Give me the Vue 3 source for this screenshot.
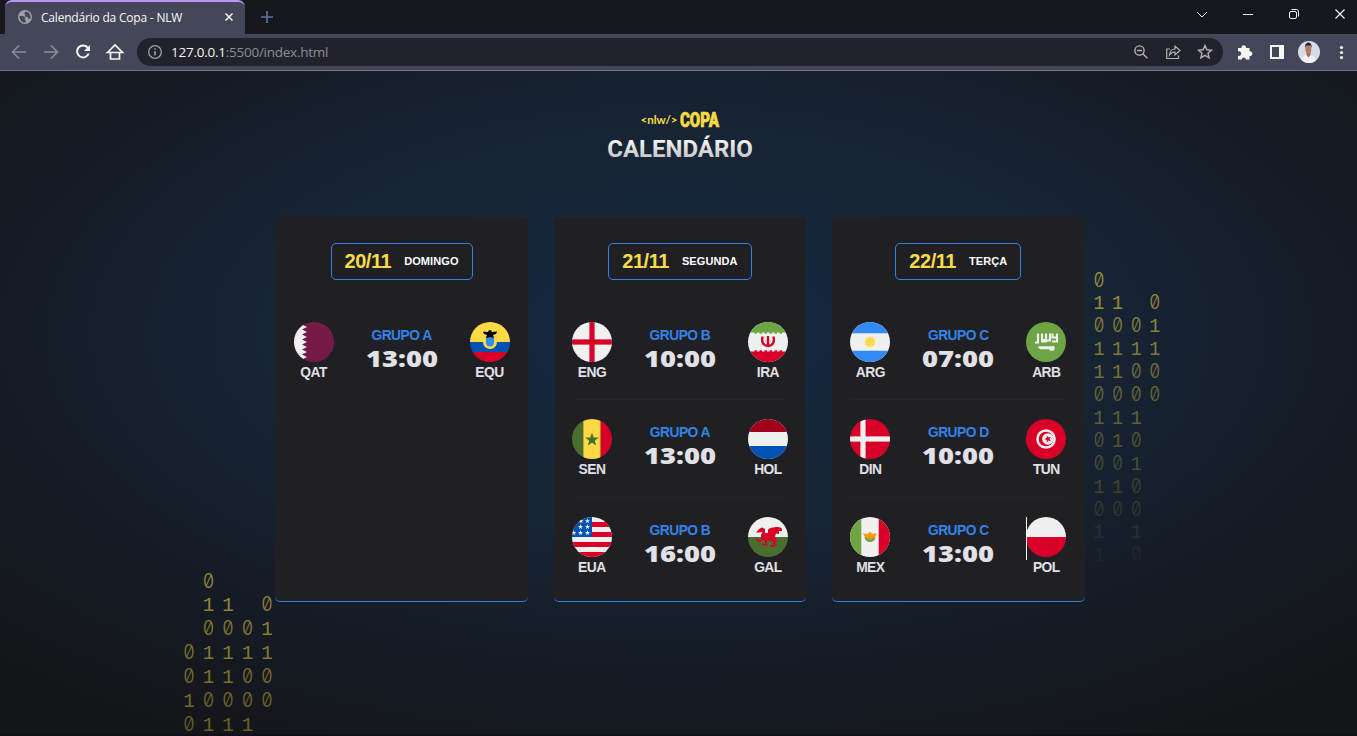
<script setup>
const star = (x, y, r) => {
  const pts = []
  for (let i = 0; i < 10; i++) {
    const a = (Math.PI / 5) * i - Math.PI / 2
    const q = i % 2 ? r * 0.4 : r
    pts.push((x + q * Math.cos(a)).toFixed(2) + ',' + (y + q * Math.sin(a)).toFixed(2))
  }
  return pts.join(' ')
}
const poly = (x, y, r, fill) => `<polygon points="${star(x, y, r)}" fill="${fill}"/>`
const box = (x, y, w, h, fill) => `<rect x="${x}" y="${y}" width="${w}" height="${h}" fill="${fill}"/>`

const sunPoints = Array.from({ length: 24 }, (_, i) => {
  const a = (Math.PI / 12) * i
  const q = i % 2 ? 4.2 : 6.2
  return (20 + q * Math.cos(a)).toFixed(2) + ',' + (20 + q * Math.sin(a)).toFixed(2)
}).join(' ')

const flags = {
  QAT: box(0, 0, 40, 40, '#751a46') +
    '<path d="M0 0H13L8 2.5L13 5L8 7.5L13 10L8 12.5L13 15L8 17.5L13 20L8 22.5L13 25L8 27.5L13 30L8 32.5L13 35L8 37.5L13 40H0Z" fill="#f0f0f0"/>',
  EQU: box(0, 0, 40, 20, '#ffda44') + box(0, 20, 40, 10, '#0052b4') + box(0, 30, 40, 10, '#d80027') +
    '<circle cx="20" cy="20" r="7" fill="#ffda44"/><path d="M16 15h8v5.500a4 4 0 0 1-8 0z" fill="#338af3"/><path d="M13 9.500l5 .500c0-2.500 4-2.500 4 0l5-.500c0 2.500-2 3.200-4 3.200l1 3.300c-1.500-1-6.500-1-8 0l1-3.300c-2 0-4-.700-4-3.200z" fill="#000"/>',
  ENG: box(0, 0, 40, 40, '#f0f0f0') + box(17.4, 0, 5.2, 40, '#d80027') + box(0, 17.4, 40, 5.2, '#d80027'),
  IRA: box(0, 0, 40, 40, '#f0f0f0') + box(0, 0, 40, 10.500, '#6da544') + box(0, 29.500, 40, 10.500, '#d80027') +
    [8, 13, 18, 23, 28, 33].map(x => box(x - 1.500, 9.500, 2.500, 2.200, '#6da544') + box(x - 1.500, 28.300, 2.500, 2.200, '#d80027')).join('') +
    '<path d="M14.700 14.500c-1.500 5 0 9 5.300 9.500c5.300-.500 6.800-4.500 5.300-9.500M20 14v11" fill="none" stroke="#d80027" stroke-width="2.400"/>',
  ARG: box(0, 0, 40, 40, '#f0f0f0') + box(0, 0, 40, 11.300, '#338af3') + box(0, 28.700, 40, 11.300, '#338af3') +
    `<polygon points="${sunPoints}" fill="#ffda44"/>`,
  ARB: box(0, 0, 40, 40, '#6da544') +
    '<path d="M9 20.500h3V11.500M16 11.500v6.500h3.500M20 11.500v8h-5M24 11.500v7h-4M26.500 11.500v4h3.500M31 11.500v8h-5" fill="none" stroke="#f0f0f0" stroke-width="2.100"/><path d="M12 24.300h16.500v3c0 2-5 2-5.500 0H15c-2 0-3-1-3-3z" fill="#f0f0f0"/>',
  SEN: box(0, 0, 11.300, 40, '#496e2d') + box(11.300, 0, 17.400, 40, '#ffda44') + box(28.700, 0, 11.300, 40, '#d80027') + poly(20, 20.800, 7.200, '#496e2d'),
  HOL: box(0, 0, 40, 40, '#f0f0f0') + box(0, 0, 40, 13, '#a2001d') + box(0, 27, 40, 13, '#0052b4'),
  EUA: box(0, 0, 40, 40, '#f0f0f0') +
    [5, 15, 25, 35].map(y => box(0, y, 40, 5, '#d80027')).join('') + box(0, 0, 20, 20, '#0052b4') +
    [[15.500, 4], [8.500, 9.800], [15.500, 9.800], [1.800, 15.800], [8.500, 15.800], [15.500, 15.800], [9, 4]].map(p => poly(p[0], p[1], 2.700, '#f0f0f0')).join(''),
  GAL: box(0, 0, 40, 20, '#f0f0f0') + box(0, 20, 40, 20, '#496e2d') +
    '<path d="M8 15.500l3-3.500 3-1.500 3 1.500v4h3l0-3c2-3 5-2 8-3 4-.500 7 1 6 4l-3 0 0 3-3-.500-1 3 1.500 3v3.500h-1v4h-5v-2h2.500v-3.500l-6-1v5h-5v-2h3v-3h-4v1.500h-4l-1-3.500h2v1.500h3v-5l1.500-3-4 .500z" fill="#d80027"/>',
  DIN: box(0, 0, 40, 40, '#d80027') + box(10.400, 0, 5.200, 40, '#f0f0f0') + box(0, 17.400, 40, 5.200, '#f0f0f0'),
  TUN: box(0, 0, 40, 40, '#d80027') +
    '<circle cx="20" cy="20" r="9.800" fill="#f0f0f0"/><circle cx="20" cy="20" r="7.300" fill="#d80027"/><circle cx="21.800" cy="20" r="5.700" fill="#f0f0f0"/>' +
    `<g transform="rotate(-90 22 20)">${poly(22, 20, 3.800, '#d80027')}</g>`,
  MEX: box(0, 0, 40, 40, '#f0f0f0') + box(0, 0, 11.300, 40, '#6da544') + box(28.700, 0, 11.300, 40, '#d80027') +
    '<path d="M14.500 19.500a5.500 5.500 0 0 0 11 0z" fill="#6da544"/><path d="M13 16.500l5 .300 2-2.300 2 2.300 5-.300-2.500 4-3.500 1.800h-2l-3.500-1.800z" fill="#ff9811"/>',
  POL: box(0, 0, 40, 20, '#f0f0f0') + box(0, 20, 40, 20, '#d80027')
}

const days = [
  { date: '20/11', name: 'DOMINGO', width: 142, games: [['QAT', 'GRUPO A', '13:00', 'EQU']] },
  {
    date: '21/11', name: 'SEGUNDA', width: 144,
    games: [['ENG', 'GRUPO B', '10:00', 'IRA'], ['SEN', 'GRUPO A', '13:00', 'HOL'], ['EUA', 'GRUPO B', '16:00', 'GAL']]
  },
  {
    date: '22/11', name: 'TERÇA', width: 126,
    games: [['ARG', 'GRUPO C', '07:00', 'ARB'], ['DIN', 'GRUPO D', '10:00', 'TUN'], ['MEX', 'GRUPO C', '13:00', 'POL']]
  }
]

const rightRows = ['0', '11 0', '0001', '1111', '1100', '0000', '111', '010', '001', '110', '000', '1 1', '1 0']
const leftRows = [' 0', ' 11 0', ' 0001', '01111', '01100', '10000', '0111']
const glyphs = rows => rows.flatMap((row, y) => [...row].map((c, x) => ({ c, x, y })).filter(g => g.c !== ' '))
const rightGlyphs = glyphs(rightRows)
const leftGlyphs = glyphs(leftRows)
</script>

<template>
  <div class="browser">
    <header class="tabs">
      <div class="tab">
        <svg class="globe" width="14" height="14" viewBox="0 0 14 14">
          <circle cx="7" cy="7" r="7" fill="#9da0a8" />
          <path d="M1.500 6l3.500 0 2.500 2-1 2 1.500.500-.500 2C4 13 1.500 10 1.500 6zM7.500 1.500L6 3.500l1.500 1-1 2 3 .500 1 2 2-.500c.500-3-1.500-6-3-6.500z" fill="#44475a" />
        </svg>
        <span class="tab-title">Calendário da Copa - NLW</span>
        <svg class="close" width="8" height="8" viewBox="0 0 8 8"><path d="M.5.5l7 7m0-7l-7 7" stroke="#f8f8f2" stroke-width="1.500" /></svg>
      </div>
      <svg class="plus" width="12" height="12" viewBox="0 0 12 12"><path d="M6 0v12M0 6h12" stroke="#6272a4" stroke-width="1.700" /></svg>
      <svg class="window" width="157" height="28" viewBox="1200 0 157 28" fill="none" stroke="#f4f4f4">
        <path d="M1197 12l5 5 5-5" stroke-width="1" />
        <path d="M1243 14.500h10" />
        <rect x="1289.500" y="11.500" width="7" height="7" rx="1.500" />
        <path d="M1291.500 9.500h5a2 2 0 0 1 2 2v5" />
        <path d="M1335.500 9.500l9 9m0-9l-9 9" stroke-width="1.200" />
      </svg>
    </header>

    <div class="toolbar">
      <svg class="nav" width="137" height="36" viewBox="0 34 137 36" fill="none">
        <g stroke="#8b8d99" stroke-width="1.600">
          <path d="M26 52H13M19 45.500L12.500 52l6.500 6.500" />
          <path d="M44 52h13M51 45.500l6.500 6.500-6.500 6.500" />
        </g>
        <path d="M88 48a6 6 0 1 0 .7 5.500" stroke="#f8f8f2" stroke-width="2" />
        <path d="M90 45v6h-6z" fill="#f8f8f2" />
        <path d="M110.500 52v7h9v-7M107.500 52.500l7.500-7.500 7.500 7.500z" stroke="#f8f8f2" stroke-width="1.700" />
      </svg>
      <div class="address">
        <svg width="14" height="14" viewBox="0 0 14 14" fill="none" stroke="#a0a1a8">
          <circle cx="7" cy="7" r="6.300" stroke-width="1.300" /><path d="M7 6v4.500M7 3.300v1.500" stroke-width="1.500" />
        </svg>
        <span class="url"><b>127.0.0.1</b>:5500/index.html</span>
        <svg class="actions" width="84" height="28" viewBox="1130 38 84 28" fill="none" stroke="#b4b4b4" stroke-width="1.400">
          <circle cx="1139.500" cy="50.500" r="4.600" /><path d="M1142.800 53.800l4.500 4.500M1137 50.500h5" />
          <path d="M1170 49h-3.300v9.500h11.800V55.500" stroke-width="1.200" />
          <path d="M1169.500 55c.5-4 3-6 5.500-6v-3l5 4.500-5 4.500v-3c-2.500 0-4 1-5.500 3z" stroke-width="1.200" />
          <path d="M1205 45.500l1.900 4.300 4.600.4-3.500 3.100 1.100 4.600-4.100-2.500-4.100 2.500 1.100-4.600-3.500-3.100 4.600-.4z" />
        </svg>
      </div>
      <svg class="extras" width="134" height="36" viewBox="1223 34 134 36">
        <path d="M1238 48h3.500a2.300 2.300 0 1 1 4.500 0h3.500v3.300a2.400 2.400 0 1 1 0 4.700v3.500h-3.700a2 2 0 1 0-4 0H1238v-3.800a2.300 2.300 0 1 0 0-4.200z" fill="#f8f8f2" />
        <path d="M1270 45h14v14h-14zM1272 47v10h7V47z" fill="#f8f8f2" fill-rule="evenodd" />
        <clipPath id="avatar"><circle cx="1309" cy="52" r="11" /></clipPath>
        <g clip-path="url(#avatar)">
          <rect x="1298" y="41" width="22" height="22" fill="#d8dbea" />
          <path d="M1301 63c0-5 2-7.500 5-8h5c3 .500 5 3 5 8z" fill="#f7f1f3" />
          <path d="M1306.500 52h4v3l-2 2.500-2-2.500z" fill="#a56b53" />
          <ellipse cx="1308.300" cy="49" rx="3" ry="4.500" fill="#b67a60" />
          <path d="M1305 48c-.8-7.500 7.500-7.500 6.800 0l-1-2.500h-4.800z" fill="#29211f" />
        </g>
        <g fill="#f8f8f2"><circle cx="1341.500" cy="47.500" r="1.600" /><circle cx="1341.500" cy="52.500" r="1.600" /><circle cx="1341.500" cy="57.500" r="1.600" /></g>
      </svg>
    </div>

    <main class="page">
      <svg class="digits right" width="90" height="320" viewBox="-5 -10 90 320">
        <defs>
          <linearGradient id="fadeRight" gradientUnits="userSpaceOnUse" x1="0" y1="0" x2="0" y2="296">
            <stop offset="0" stop-color="#f7dd43" stop-opacity=".64" /><stop offset="1" stop-color="#f7dd43" stop-opacity=".02" />
          </linearGradient>
        </defs>
        <g fill="url(#fadeRight)">
          <text v-for="(g, i) in rightGlyphs" :key="i" :class="g.c === '0' ? 'zero' : 'one'" :x="10 + g.x * 18.600" :y="16.500 + g.y * 22.900" font-size="19.500" :textLength="g.c === '0' ? 10.500 : 11" lengthAdjust="spacingAndGlyphs">{{ g.c }}</text>
        </g>
      </svg>
      <svg class="digits left" width="110" height="178" viewBox="-5 -10 110 178">
        <defs>
          <linearGradient id="fadeLeft" gradientUnits="userSpaceOnUse" x1="0" y1="0" x2="0" y2="170">
            <stop offset="0" stop-color="#f7dd43" stop-opacity=".6" /><stop offset="1" stop-color="#f7dd43" stop-opacity=".36" />
          </linearGradient>
        </defs>
        <g fill="url(#fadeLeft)">
          <text v-for="(g, i) in leftGlyphs" :key="i" :class="g.c === '0' ? 'zero' : 'one'" :x="10 + g.x * 19.500" :y="17.500 + g.y * 23.900" font-size="20.500" :textLength="g.c === '0' ? 11 : 11.500" lengthAdjust="spacingAndGlyphs">{{ g.c }}</text>
        </g>
      </svg>

      <svg class="logo" width="160" height="60" viewBox="600 105 160 60">
        <defs>
          <linearGradient id="silver" x1="0" y1="0" x2="0" y2="1">
            <stop offset=".2" stop-color="#f4f4f4" /><stop offset="1" stop-color="#b9b9bc" />
          </linearGradient>
        </defs>
        <text class="nlw" x="640.500" y="124" textLength="37" lengthAdjust="spacingAndGlyphs">&lt;nlw/&gt;</text>
        <text class="copa" x="680" y="127.300" textLength="39" lengthAdjust="spacingAndGlyphs">COPA</text>
        <text class="heading" x="607.300" y="156.500" textLength="145.500" lengthAdjust="spacingAndGlyphs" fill="url(#silver)">CALENDÁRIO</text>
      </svg>

      <section class="cards">
        <article v-for="day in days" :key="day.date" class="card">
          <h2 class="day" :style="{ width: day.width + 'px' }">{{ day.date }} <span>{{ day.name }}</span></h2>
          <ul>
            <li v-for="game in day.games" :key="game[0]">
              <div class="team">
                <svg class="flag" width="40" height="40" viewBox="0 0 40 40" v-html="flags[game[0]]" />
                <span>{{ game[0] }}</span>
              </div>
              <div class="match">
                <span class="group">{{ game[1] }}</span>
                <svg width="74" height="26" viewBox="0 -3 74 26"><text class="time" x="1" y="17.500" textLength="72" lengthAdjust="spacingAndGlyphs">{{ game[2] }}</text></svg>
              </div>
              <div class="team" :class="{ caret: game[3] === 'POL' }">
                <svg class="flag" width="40" height="40" viewBox="0 0 40 40" v-html="flags[game[3]]" />
                <span>{{ game[3] }}</span>
              </div>
            </li>
          </ul>
        </article>
      </section>
    </main>
  </div>
</template>

<style>
body {
  margin: 0;
  overflow: hidden;
  background: #17181d;
}
</style>

<style scoped>
.browser {
  width: 1357px;
  height: 736px;
  display: flex;
  flex-direction: column;
  overflow: hidden;
  font-family: "Liberation Sans", Arial, sans-serif;
}
svg {
  display: block;
  flex: none;
}
.tabs {
  height: 34px;
  flex: none;
  display: flex;
  background: #17181d;
}
.tab {
  width: 240px;
  box-sizing: border-box;
  margin-left: 5px;
  padding: 0 12px 2px 13px;
  display: flex;
  align-items: center;
  background: #44475a;
  border-top: 2px solid #bd93f9;
  border-radius: 7px 7px 0 0;
}
.tab-title {
  flex: 1;
  margin-left: 9px;
  font: 12px "Open Sans", "Noto Sans", sans-serif;
  letter-spacing: -0.2px;
  color: #f8f8f2;
}
.plus {
  margin: 11px 0 0 16px;
}
.window {
  margin-left: auto;
  overflow: visible;
}
.toolbar {
  height: 36px;
  flex: none;
  display: flex;
  align-items: center;
  background: #44475a;
  border-bottom: 1px solid #737584;
}
.address {
  flex: 1;
  height: 28px;
  box-sizing: border-box;
  padding: 0 9px 0 11px;
  display: flex;
  align-items: center;
  border-radius: 14px;
  background: #21222c;
}
.url {
  margin-left: 9px;
  font: 13.5px "Open Sans", "Noto Sans", sans-serif;
  letter-spacing: -0.25px;
  color: #8d8e92;
}
.url b {
  font-weight: 400;
  color: #f8f8f2;
}
.actions {
  margin-left: auto;
}
.page {
  position: relative;
  flex: 1;
  display: flex;
  flex-direction: column;
  background: radial-gradient(ellipse 960px 470px at 679px 262px, #182842 0%, #172434 43%, #151c27 70%, #141518 100%);
  border-bottom: 2px solid #101116;
}
.digits {
  position: absolute;
}
.digits text {
  text-anchor: middle;
}
.zero {
  font-family: Inter, sans-serif;
  font-weight: 300;
  font-feature-settings: "zero" 1;
}
.one {
  font-family: "Liberation Mono", monospace;
}
.right {
  left: 1084px;
  top: 189px;
}
.left {
  left: 174px;
  top: 489px;
}
.logo {
  margin: 34px 0 0 600px;
}
.nlw {
  font: 700 12px Lato, sans-serif;
  fill: #f7dd43;
}
.copa {
  font: 900 19.500px Roboto, sans-serif;
  fill: #f7dd43;
  stroke: #f7dd43;
  stroke-width: 0.7px;
}
.heading {
  font: 700 23.5px Roboto, sans-serif;
}
.cards {
  display: flex;
  gap: 25.900px;
  margin: 52px 0 0 275.3px;
}
.card {
  width: 252.500px;
  height: 385px;
  box-sizing: border-box;
  padding: 26px 18.250px 0;
  display: flex;
  flex-direction: column;
  align-items: center;
  background: #202024;
  border-bottom: 1px solid #3283e8;
  border-radius: 5px;
}
.day {
  height: 37px;
  box-sizing: border-box;
  margin: 0;
  padding-bottom: 1px;
  display: flex;
  align-items: center;
  justify-content: center;
  gap: 13px;
  border: 1px solid #3283e8;
  border-radius: 5px;
  font-size: 20px;
  letter-spacing: -0.45px;
  font-weight: 700;
  line-height: 1;
  color: #f7dd43;
}
.day span {
  padding-top: 1px;
  font-size: 11px;
  letter-spacing: 0.1px;
  color: #fff;
}
ul {
  width: 100%;
  list-style: none;
  margin: 42px 0 0;
  padding: 0;
}
li {
  height: 77.300px;
  display: flex;
  justify-content: space-between;
}
li + li {
  border-top: 1px solid #24242f;
  padding-top: 19px;
}
.team {
  position: relative;
  width: 40px;
  display: flex;
  flex-direction: column;
  align-items: center;
}
.team span {
  margin-top: 2px;
  font-size: 13.8px;
  letter-spacing: -0.5px;
  font-weight: 700;
  line-height: 17px;
  color: #e1e1e6;
}
.flag {
  border-radius: 50%;
  overflow: hidden;
}
.caret::before {
  content: "";
  position: absolute;
  left: 0;
  top: 0;
  width: 1px;
  height: 43px;
  background: #fff;
}
.match {
  display: flex;
  flex-direction: column;
  align-items: center;
  padding-top: 6px;
}
.group {
  font-size: 13.8px;
  letter-spacing: -0.52px;
  font-weight: 700;
  line-height: 15px;
  color: #3283e8;
  margin-bottom: 3px;
}
.time {
  font: 800 23.500px "Open Sans", sans-serif;
  fill: #e1e1e6;
}
</style>
